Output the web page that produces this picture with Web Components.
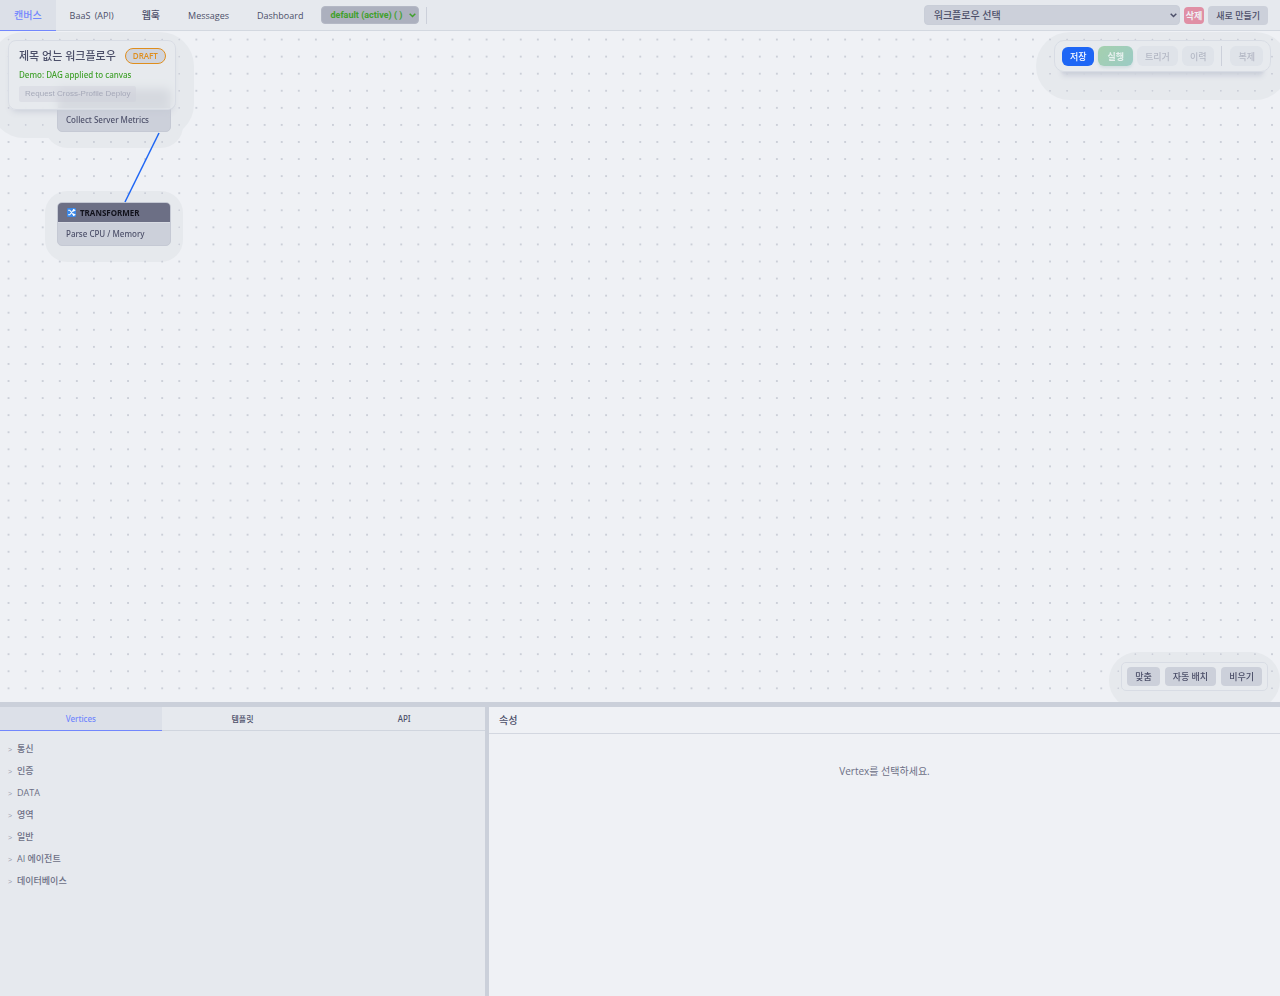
<!DOCTYPE html>
<html lang="ko">
<head>
<meta charset="utf-8">
<title>Workflow Canvas</title>
<style>
  :root {
    --base: #eff1f5;
    --mantle: #e6e9ee;
    --crust: #dce0e8;
    --surface: #ccd0da;
    --surface-2: #acb0be;
    --halo: #e6e9ed;
    --text: #4c4f69;
    --subtext: #6c6f85;
    --blue: #1e66f5;
    --lavender: #7287fd;
    --green: #40a02b;
    --orange: #df8e1d;
  }
  html, body { height: 100%; }
  body {
    margin: 0;
    background: var(--base);
    color: var(--text);
    font: 500 9px/12px "Open Sans", "Noto Sans CJK KR", sans-serif;
  }
</style>
</head>
<body>
<workflow-app></workflow-app>

<script>
function define(name, html, setup) {
  customElements.define(name, class extends HTMLElement {
    connectedCallback() {
      if (this.shadowRoot) return;
      this.attachShadow({ mode: 'open' }).innerHTML = html;
      if (setup) setup(this, this.shadowRoot);
    }
  });
}

// Variants: primary, run, danger, ghost, request
define('flow-button', `
  <style>
    :host { display: block; }
    button {
      display: block;
      box-sizing: border-box;
      height: 19px;
      padding: 0 8px;
      border: 0;
      border-radius: 4px;
      background: var(--surface);
      color: var(--text);
      font: inherit;
      line-height: 19px;
      white-space: nowrap;
    }
    :host([variant="danger"]) button { padding: 0 2px; height: 17px; line-height: 17px; background: #e08fa5; color: var(--base); font-weight: 700; }
    :host([variant="primary"]) button { border-radius: 6px; background: var(--blue); color: #fff; }
    :host([variant="run"]) button { height: 20px; padding: 0 9px; border-radius: 6px; background: linear-gradient(135deg, #a5d0ae, #9bcbc5); color: #e6f0ee; font-weight: 700; box-shadow: 0 2px 3px #d2dde0; }
    :host([variant="ghost"]) button { height: 20px; border-radius: 6px; background: #dfe3e9; color: #b4b8c5; }
    :host([variant="request"]) button { height: 16px; padding: 0 6px; border-radius: 2px; background: rgba(204, 208, 218, .4); color: #a6a9b9; font: 400 8px/16px "Liberation Sans", sans-serif; }
  </style>
  <button type="button"><slot></slot></button>
`, (el, root) => {
  root.querySelector('button').disabled = el.hasAttribute('disabled');
});

define('flow-select', `
  <style>
    :host { display: block; position: relative; }
    select {
      appearance: none;
      display: block;
      width: 100%;
      height: 20px;
      padding: 0 22px 0 9px;
      border: 1px solid #c9ced8;
      border-radius: 4px;
      background: var(--surface);
      color: var(--text);
      font: inherit;
      font-size: 10px;
    }
    svg { position: absolute; right: 3px; top: 50%; width: 7px; height: 5px; margin-top: -2px; fill: none; stroke: currentColor; stroke-width: 1.5; pointer-events: none; }
    :host([variant="profile"]) { color: var(--green); }
    :host([variant="profile"]) select {
      height: 18px;
      padding: 0 14px 0 8px;
      border-color: #b4b8c5;
      background: var(--surface-2);
      color: var(--green);
      font: 700 9px Roboto, sans-serif;
    }
  </style>
  <select><option></option></select>
  <svg viewBox="0 0 7 5"><path d="M.7.7 3.5 3.5 6.3.7"/></svg>
`, (el, root) => {
  root.querySelector('option').textContent = el.getAttribute('value');
  root.querySelector('select').setAttribute('aria-label', el.getAttribute('label'));
});

define('app-header', `
  <style>
    :host { display: flex; justify-content: space-between; box-sizing: border-box; height: 31px; background: var(--mantle); border-bottom: 1px solid #d3d8e0; }
    nav, .tools { display: flex; align-items: center; }
    nav a {
      box-sizing: border-box;
      height: 31px;
      padding: 0 14px;
      border-bottom: 1px solid transparent;
      color: var(--text);
      line-height: 31px;
      text-decoration: none;
      white-space: nowrap;
    }
    nav a:lang(ko) { font-size: 10px; }
    nav a.active { background: var(--crust); border-color: var(--lavender); color: var(--lavender); }
    .api { margin-left: 2px; }
    .profile { width: 98px; margin-left: 4px; }
    .divider { width: 1px; height: 17px; margin-left: 7px; background: var(--surface); }
    .tools { gap: 4px; padding-right: 12px; }
    .workflow { width: 256px; }
  </style>
  <nav>
    <a class="active" href="#canvas">캔버스</a>
    <a lang="en" href="#baas">BaaS <span class="api">(API)</span></a>
    <a href="#webhook">웹훅</a>
    <a lang="en" href="#messages">Messages</a>
    <a lang="en" href="#dashboard">Dashboard</a>
    <flow-select class="profile" variant="profile" label="Profile" value="default (active) ( )"></flow-select>
    <span class="divider"></span>
  </nav>
  <div class="tools">
    <flow-select class="workflow" label="워크플로우" value="워크플로우 선택"></flow-select>
    <flow-button variant="danger">삭제</flow-button>
    <flow-button>새로 만들기</flow-button>
  </div>
`);

define('flow-node', `
  <style>
    :host { display: block; position: absolute; width: 114px; font-family: "Noto Sans", "Noto Sans CJK KR", sans-serif; font-size: 8px; }
    :host::before { content: ""; position: absolute; inset: -11px -12px -16px; border-radius: 22px; background: var(--halo); mix-blend-mode: darken; }
    article { position: relative; overflow: hidden; box-sizing: border-box; border: 1px solid #c5c9d4; border-radius: 5px; background: var(--surface); }
    header { display: flex; align-items: center; gap: 4px; height: 19px; padding: 0 9px; background: var(--subtext); border-bottom: 1px solid #d8dbe3; color: #11111b; font-weight: 700; }
    p { margin: 0; padding: 0 8px; line-height: 22px; white-space: nowrap; }
  </style>
  <article>
    <header><slot name="type"></slot></header>
    <p><slot></slot></p>
  </article>
`);

// Translucent bar that floats over the canvas
define('floating-panel', `
  <style>
    :host { display: block; position: absolute; }
    :host::before { content: ""; position: absolute; inset: var(--halo-inset, -8px -18px -28px); border-radius: 34px; background: var(--halo); mix-blend-mode: darken; }
    .box { position: relative; padding: var(--panel-padding, 5px 7px); border: 1px solid #d8dce4; border-radius: var(--panel-radius, 10px); background: rgba(231, 234, 238, .86); box-shadow: var(--panel-shadow, none); backdrop-filter: blur(5px); }
  </style>
  <div class="box"><slot></slot></div>
`);

define('flow-canvas', `
  <style>
    :host { display: block; position: relative; overflow: hidden; isolation: isolate; background: var(--base); }
    .grid { position: absolute; width: 100%; height: 100%; }
    .edge { position: absolute; left: 120px; top: 98px; width: 44px; height: 78px; stroke: var(--blue); stroke-width: 1.5; }
    .icon { width: 9px; height: 9px; }
    .first { left: 57px; top: 57px; }
    .second { left: 57px; top: 171px; }
    .title { left: 8px; top: 9px; --panel-padding: 7px 9px 7px 10px; --panel-radius: 8px; --panel-shadow: 0 5px 7px -4px #c6cad5; }
    .title .row { display: flex; align-items: center; gap: 9px; }
    h1 { margin: 0; font-size: 11px; line-height: 16px; font-weight: 500; white-space: nowrap; }
    .badge { box-sizing: border-box; padding: 0 7px; border: 1px solid var(--orange); border-radius: 8px; background: #d0d4dd; color: var(--orange); font-size: 8px; line-height: 14px; font-weight: 600; }
    .status { margin: 5px 0; color: var(--green); font-family: "Noto Sans", sans-serif; font-size: 8px; }
    .actions { right: 9px; top: 9px; --panel-shadow: 0 9px 3px -8px #cdd1db, 0 12px 5px -8px #cdd1db; }
    .view { right: 12px; bottom: 11px; --panel-padding: 4px 5px; --panel-radius: 5px; --halo-inset: -10px -12px -18px; }
    .actions .row { display: flex; align-items: center; gap: 4px; }
    .view .row { display: flex; gap: 5px; }
    .divider { width: 1px; height: 20px; margin: 0 4px 0 3px; background: var(--surface); }
  </style>
  <svg class="grid" viewBox="0 0 1500 786" preserveAspectRatio="xMinYMin slice" aria-hidden="true">
    <defs>
      <pattern id="dots" width="20" height="20" patternUnits="userSpaceOnUse">
        <circle cx="10" cy="10" r="1.2" fill="#c3c7d1"/>
      </pattern>
    </defs>
    <rect width="1500" height="1600" fill="url(#dots)"/>
  </svg>
  <flow-node class="first">Collect Server Metrics</flow-node>
  <flow-node class="second">
    <svg slot="type" class="icon" viewBox="0 0 16 16" aria-hidden="true">
      <rect width="16" height="16" rx="2" fill="#3b88e8"/>
      <path d="M2 4h3l6 8h2M2 12h3l6-8h2M11 2l3 2-3 2M11 10l3 2-3 2" fill="none" stroke="#fff" stroke-width="1.8"/>
    </svg>
    <span slot="type">TRANSFORMER</span>
    Parse CPU / Memory
  </flow-node>
  <svg class="edge" viewBox="0 0 44 78" aria-hidden="true"><path d="M39 4 5 73"/></svg>
  <floating-panel class="title">
    <div class="row"><h1>제목 없는 워크플로우</h1><span class="badge">DRAFT</span></div>
    <div class="status">Demo: DAG applied to canvas</div>
    <div class="row"><flow-button variant="request" disabled>Request Cross-Profile Deploy</flow-button></div>
  </floating-panel>
  <floating-panel class="actions">
    <div class="row">
      <flow-button variant="primary">저장</flow-button>
      <flow-button variant="run" disabled>실행</flow-button>
      <flow-button variant="ghost" disabled>트리거</flow-button>
      <flow-button variant="ghost" disabled>이력</flow-button>
      <span class="divider"></span>
      <flow-button variant="ghost" disabled>복제</flow-button>
    </div>
  </floating-panel>
  <floating-panel class="view">
    <div class="row">
      <flow-button>맞춤</flow-button>
      <flow-button>자동 배치</flow-button>
      <flow-button>비우기</flow-button>
    </div>
  </floating-panel>
`);

define('vertex-palette', `
  <style>
    :host { display: block; background: var(--mantle); overflow: hidden; }
    .tabs { display: flex; border-bottom: 1px solid #d0d5de; font-family: "Noto Sans", "Noto Sans CJK KR", sans-serif; font-size: 8px; }
    .tabs button { flex: 1; height: 23px; padding: 0; border: 0; background: none; color: var(--text); font: inherit; }
    .tabs button.active { background: var(--crust); color: var(--lavender); box-shadow: 0 1px var(--lavender); }
    ul { margin: 0; padding: 7px 8px; list-style: none; }
    li button { display: flex; align-items: center; gap: 5px; height: 22px; padding: 0; border: 0; background: none; color: var(--subtext); font: inherit; }
    li button::before { content: ">"; width: 4px; color: #9ca0b0; font: 7px "Liberation Sans", sans-serif; }
  </style>
  <div class="tabs" role="tablist">
    <button type="button" role="tab" class="active" aria-selected="true">Vertices</button>
    <button type="button" role="tab">템플릿</button>
    <button type="button" role="tab">API</button>
  </div>
  <ul></ul>
`, (el, root) => {
  const groups = ['통신', '인증', 'DATA', '영역', '일반', 'AI 에이전트', '데이터베이스'];
  root.querySelector('ul').innerHTML = groups
    .map((name) => `<li><button type="button">${name}</button></li>`)
    .join('');
});

define('property-panel', `
  <style>
    :host { display: block; background: var(--base); }
    h2 { margin: 0; padding: 0 10px; border-bottom: 1px solid #d3d7e0; font-size: 10px; line-height: 26px; font-weight: 500; }
    p { margin: 0; padding: 29px 10px; color: var(--subtext); font-size: 10px; line-height: 16px; font-weight: 400; text-align: center; }
  </style>
  <h2>속성</h2>
  <p>Vertex를 선택하세요.</p>
`);

define('workflow-app', `
  <style>
    :host { display: grid; grid-template-rows: 31px 671fr 5px 289fr; height: 100vh; background: #cbd0da; }
    .bottom { display: grid; grid-template-columns: 485fr 4px 791fr; grid-row: 4; min-height: 0; }
    property-panel { grid-column: 3; }
  </style>
  <app-header></app-header>
  <flow-canvas></flow-canvas>
  <div class="bottom">
    <vertex-palette></vertex-palette>
    <property-panel></property-panel>
  </div>
`);
</script>
</body>
</html>
